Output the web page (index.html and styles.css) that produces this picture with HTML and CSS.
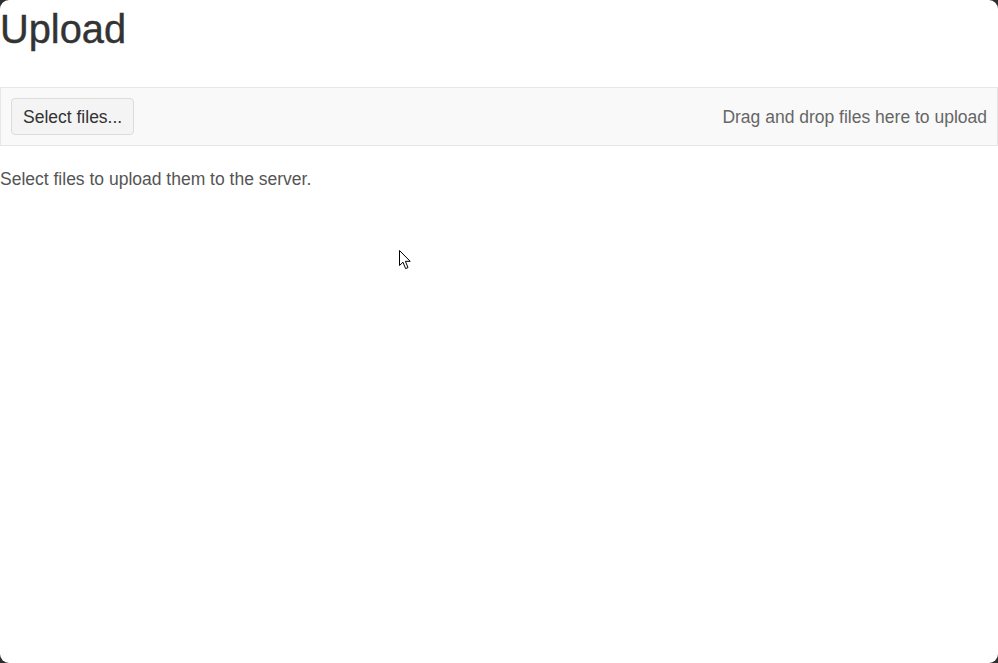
FILE: index.html
```
<!DOCTYPE html>
<html lang="en">
<head>
<meta charset="utf-8">
<title>Upload</title>
<link rel="stylesheet" href="styles.css">
</head>
<body>
<div class="window">
  <h1 class="title">Upload</h1>
  <div class="dropzone">
    <button class="btn" type="button">Select files...</button>
    <span class="hint">Drag and drop files here to upload</span>
  </div>
  <p class="desc">Select files to upload them to the server.</p>
  <svg class="cursor" width="14" height="21" viewBox="0 0 14 21" aria-hidden="true">
    <path d="M0.5 0.5 L0.5 15.5 L4 12.2 L6.6 18.6 L9 17.6 L6.4 11.3 L11.2 11.3 Z" fill="#fff" stroke="#000" stroke-width="1" stroke-linejoin="miter"/>
  </svg>
</div>
</body>
</html>
```
FILE: styles.css
```
html, body {
  margin: 0;
  padding: 0;
  height: 100%;
  background: #2e2e2e;
}
body {
  font-family: "Liberation Sans", Arial, Helvetica, sans-serif;
  font-size: 17.5px;
  line-height: 1.5;
  color: #333;
}
.window {
  position: relative;
  height: 663px;
  background: #fff;
  border-radius: 9px;
  overflow: hidden;
  display: flow-root;
}
.title {
  margin: 7px 0 36px;
  font-size: 39.8px;
  font-weight: 500;
  line-height: 44px;
  color: #333;
  -webkit-text-stroke: 0.4px #333;
}
.dropzone {
  display: flex;
  align-items: center;
  justify-content: space-between;
  padding: 10px;
  background: #f9f9f9;
  border: 1px solid #e6e6e6;
}
.btn {
  font-family: inherit;
  font-size: 17.5px;
  line-height: 23px;
  padding: 7px 11px 5px;
  color: #333;
  background: #f4f4f4;
  border: 1px solid #dcdcdc;
  border-radius: 4px;
  margin: 0;
}
.hint {
  color: #666;
  padding-top: 2px;
}
.desc {
  margin: 20px 0 0;
  color: #555;
  line-height: 26.4px;
}
.cursor {
  position: absolute;
  left: 399px;
  top: 250px;
}
```
